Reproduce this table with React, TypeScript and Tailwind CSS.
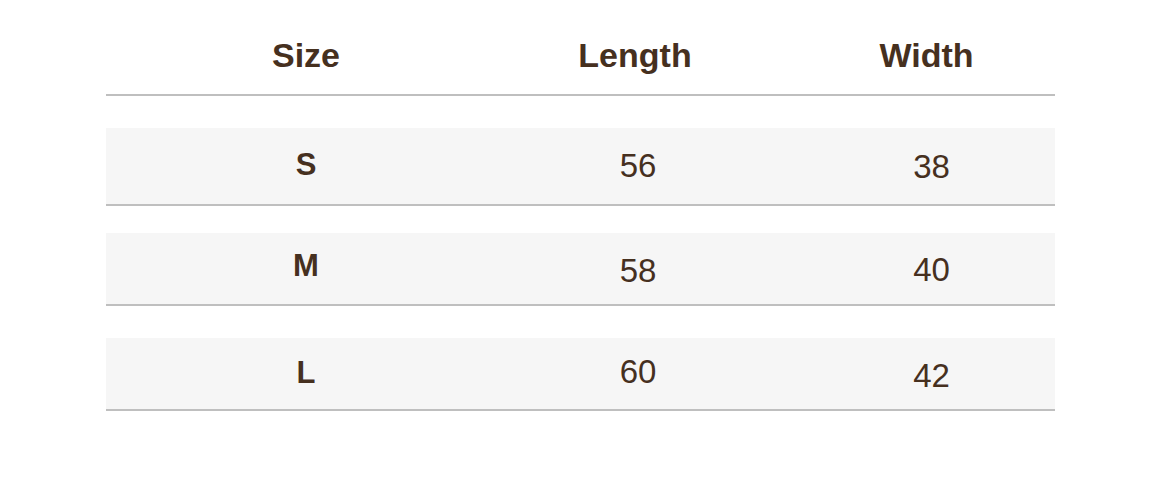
const rows = [
  { size: 'S', length: '56', width: '38', rowClass: 'mt-[32px] h-[78px]', nudge: ['pb-[3px]', 'pb-[2px]', 'pb-0'] },
  { size: 'M', length: '58', width: '40', rowClass: 'mt-[27px] h-[73px]', nudge: ['pb-[6px]', 'pt-[3px]', 'pt-[1px]'] },
  { size: 'L', length: '60', width: '42', rowClass: 'mt-[32px] h-[73px]', nudge: ['pb-[3px]', 'pb-[5px]', 'pt-[3px]'] },
];

const SizeChart = () => {
  return (
    <div
      className="w-[1163px] h-[493px] bg-white pl-[106px] text-[#46301f]"
      style={{ fontFamily: '"Liberation Sans", Arial, sans-serif' }}
    >
      <div className="w-[949px]">
        {/* header */}
        <div className="grid grid-cols-[400px_264px_1fr] h-[96px] pt-[38px] border-b-2 border-[#bfbfbf] text-[34px] font-bold leading-none">
          <div className="text-center">Size</div>
          <div className="text-center pr-[6px]">Length</div>
          <div className="text-center pl-[28px]">Width</div>
        </div>

        {rows.map((row) => (
          <div
            key={row.size}
            className={`grid grid-cols-[400px_264px_1fr] bg-[#f6f6f6] border-b-2 border-[#bfbfbf] leading-none ${row.rowClass}`}
          >
            <div className={`flex items-center justify-center text-[31px] font-bold ${row.nudge[0]}`}>{row.size}</div>
            <div className={`flex items-center justify-center text-[33px] ${row.nudge[1]}`}>{row.length}</div>
            <div className={`flex items-center justify-center text-[33px] pl-[38px] ${row.nudge[2]}`}>{row.width}</div>
          </div>
        ))}
      </div>
    </div>
  );
};

export default function App() {
  return <SizeChart />;
}
